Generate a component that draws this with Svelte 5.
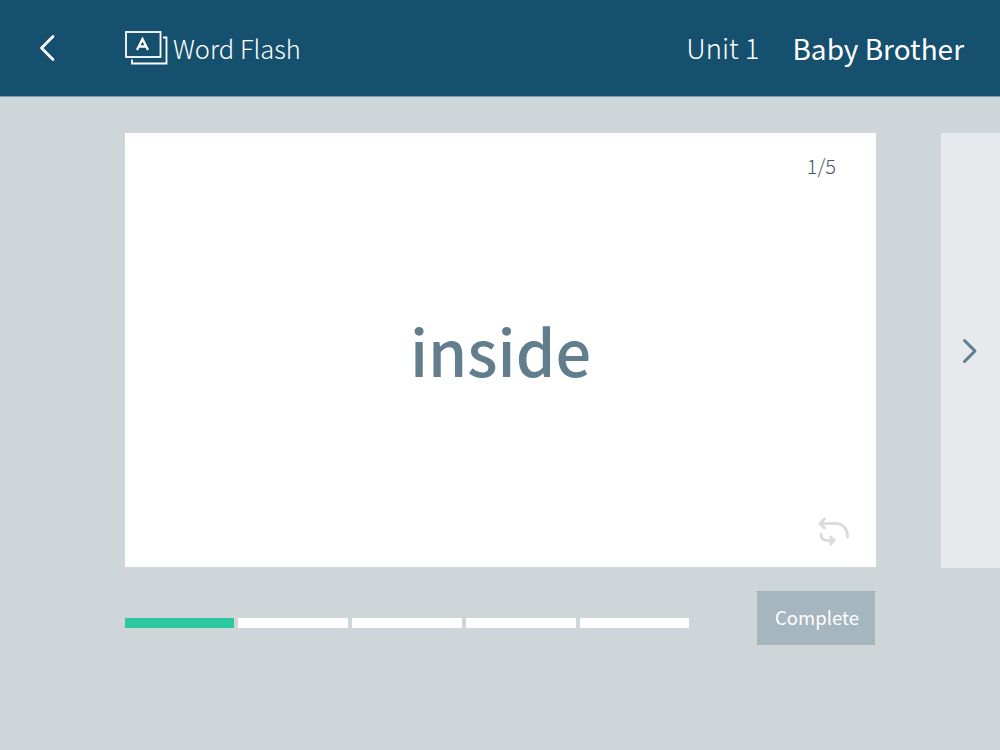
<script>
  const segments = [true, false, false, false, false];
</script>

<div class="page">
  <header class="bar">
    <button class="back" aria-label="Back">
      <svg width="18" height="28" viewBox="0 0 18 28"><path d="M15 2.500 L3.500 14 L15 25.500" fill="none" stroke="#fff" stroke-width="2.800" stroke-linecap="round" stroke-linejoin="round"/></svg>
    </button>
    <div class="brand">
      <svg width="44" height="34" viewBox="0 0 44 34" fill="none" stroke="#fff">
        <rect x="1" y="1" width="34.500" height="25" stroke-width="1.800"/>
        <path d="M38 6.500 H41.500 V32.500 H7 V28.500" stroke-width="1.800"/>
        <path d="M12 19 L17.500 8 L23 19 M13.800 15.500 H21.200" stroke-width="2.300"/>
      </svg>
      <span class="title">Word Flash</span>
    </div>
    <span class="unit">Unit 1</span>
    <span class="lesson">Baby Brother</span>
  </header>

  <main class="stage">
    <section class="card">
      <div class="count">1/5</div>
      <div class="word">inside</div>
      <svg class="flip" width="32" height="30" viewBox="0 0 32 30" fill="none" stroke="#dcdcdc" stroke-width="3" stroke-linecap="round" stroke-linejoin="round">
        <path d="M6.500 3 L2 7.500 L6.500 12 M2 7.500 H18 C25 7.500 29.500 13 29.500 21"/>
        <path d="M3 18 C3 22 5 24.500 9 24.500 H16 M12.500 21 L16 24.500 L12.500 28"/>
      </svg>
    </section>
    <button class="next" aria-label="Next">
      <svg width="16" height="26" viewBox="0 0 16 26"><path d="M2.500 2.500 L13 13 L2.500 23.500" fill="none" stroke="#5f7d90" stroke-width="3" stroke-linecap="round" stroke-linejoin="round"/></svg>
    </button>
  </main>

  <footer class="foot">
    <div class="progress">
      {#each segments as on}
        <span class="seg" class:on></span>
      {/each}
    </div>
    <button class="complete">Complete</button>
  </footer>
</div>

<style>
  :global(body) { margin: 0; }
  .page {
    width: 1000px;
    height: 750px;
    background: #ced6da;
    overflow: hidden;
    font-family: "Noto Sans CJK KR", "Noto Sans", sans-serif;
  }
  button { font-family: inherit; border: 0; padding: 0; }
  .bar {
    height: 96px;
    background: #15506f;
    border-bottom: 1px solid #7f9fb2;
    display: flex;
    align-items: center;
    color: #fff;
  }
  .back {
    background: none;
    display: flex;
    margin-left: 38px;
    width: 87px;
  }
  .brand { display: flex; align-items: center; gap: 4px; flex: 1; }
  .title { font-size: 25.500px; font-weight: 300; line-height: 1; }
  .unit { font-size: 27.500px; font-weight: 300; line-height: 1; margin-right: 33px; }
  .lesson { font-size: 28px; font-weight: 400; line-height: 1; margin-right: 36px; }
  .stage {
    display: flex;
    padding: 36px 0 0 125px;
    gap: 65px;
  }
  .card {
    width: 751px;
    height: 434px;
    flex: none;
    background: #fff;
    position: relative;
    display: flex;
    align-items: center;
    justify-content: center;
  }
  .count {
    position: absolute;
    top: 20px;
    right: 40px;
    font-size: 20px;
    font-weight: 300;
    line-height: 26px;
    color: #46596a;
  }
  .word {
    font-size: 63px;
    font-weight: 500;
    color: #627d8c;
    line-height: 1;
    margin-top: -2px;
  }
  .flip { position: absolute; right: 26px; bottom: 21px; }
  .next {
    flex: 1;
    height: 435px;
    background: #e6eaed;
    display: flex;
    align-items: center;
    padding-left: 21px;
  }
  .foot {
    display: flex;
    align-items: flex-start;
    justify-content: space-between;
    width: 751px;
    margin: 23px 0 0 125px;
  }
  .progress { display: flex; gap: 4px; margin-top: 27px; }
  .seg { width: 110px; height: 10px; background: #fff; }
  .seg:first-child, .seg:last-child { width: 109px; }
  .seg.on { background: #2ec8a0; }
  .complete {
    width: 118px;
    height: 54px;
    margin-right: 1px;
    padding: 0 0 3px 2px;
    background: #a6b6bf;
    color: #fff;
    font-size: 18.500px;
    font-weight: 400;
  }
</style>
